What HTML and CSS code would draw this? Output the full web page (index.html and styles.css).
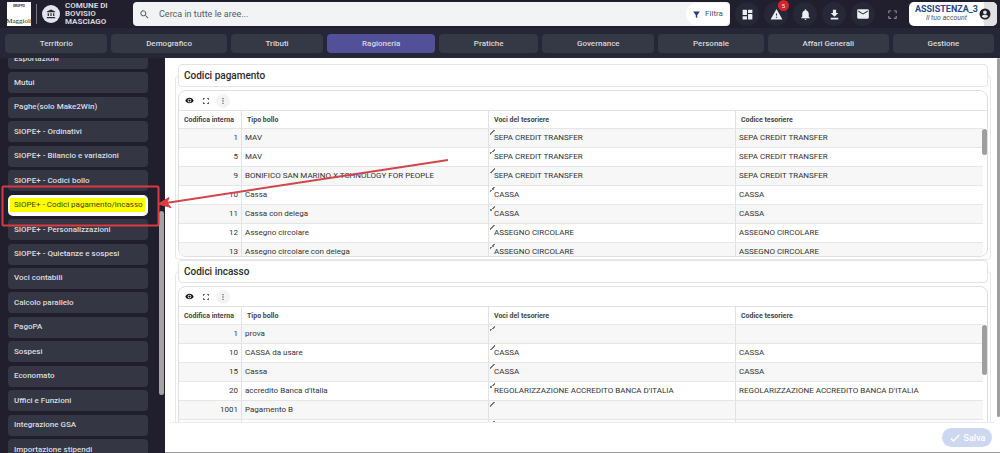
FILE: index.html
```html
<!DOCTYPE html>
<html lang="it">
<head>
<meta charset="utf-8">
<title>Codici pagamento/incasso</title>
<link rel="stylesheet" href="styles.css">
</head>
<body>
<svg class="defs" aria-hidden="true">
  <symbol id="eye" viewBox="0 0 24 24"><path d="M12 4.500C7 4.500 2.700 7.600 1 12c1.700 4.400 6 7.500 11 7.500s9.300-3.100 11-7.500c-1.700-4.400-6-7.500-11-7.500zM12 17a5 5 0 1 1 0-10 5 5 0 0 1 0 10zm0-8a3 3 0 1 0 0 6 3 3 0 0 0 0-6z"/></symbol>
  <symbol id="full" viewBox="0 0 24 24"><path d="M3 3h6v2H5v4H3zM15 3h6v6h-2V5h-4zM3 15h2v4h4v2H3zM19 15h2v6h-6v-2h4z"/></symbol>
  <symbol id="dots" viewBox="0 0 24 24"><circle cx="12" cy="5" r="2"/><circle cx="12" cy="12" r="2"/><circle cx="12" cy="19" r="2"/></symbol>
</svg>

<header class="topbar">
  <div class="logo">
    <span class="logo-small">GRUPPO</span>
    <span class="logo-name">Maggioli</span>
  </div>
  <span class="divider"></span>
  <span class="bank"><svg viewBox="0 0 24 24"><path d="M4 10v7h3v-7zm6.500 0v7h3v-7zM2 22h20v-3H2zm15-12v7h3v-7zM12 1 2 6v2h20V6z"/></svg></span>
  <div class="entity">COMUNE DI<br>BOVISIO<br>MASCIAGO</div>
  <form class="search">
    <svg viewBox="0 0 24 24"><path d="M15.500 14h-.8l-.3-.3a6.500 6.500 0 1 0-.7.7l.3.3v.8l5 5 1.500-1.500zm-6 0a4.500 4.500 0 1 1 0-9 4.500 4.500 0 0 1 0 9z"/></svg>
    <input type="text" placeholder="Cerca in tutte le aree..." aria-label="Cerca">
    <button type="button" class="filter"><svg viewBox="0 0 24 24"><path d="M3 4h18l-7 9v8l-4-2v-6z"/></svg>Filtra</button>
  </form>
  <div class="actions">
    <button type="button" class="round" aria-label="Cruscotto"><svg viewBox="0 0 24 24"><path d="M3 13h8V3H3zm0 8h8v-6H3zm10 0h8V11h-8zm0-18v6h8V3z"/></svg></button>
    <button type="button" class="round" aria-label="Avvisi"><svg viewBox="0 0 24 24"><path d="M1 21h22L12 2zm12-3h-2v-2h2zm0-4h-2v-4h2z" fill-rule="evenodd"/></svg><span class="badge">5</span></button>
    <button type="button" class="round" aria-label="Notifiche"><svg viewBox="0 0 24 24"><path d="M12 22a2 2 0 0 0 2-2h-4a2 2 0 0 0 2 2zm6-6v-5c0-3.100-1.600-5.600-4.500-6.300V4a1.500 1.500 0 0 0-3 0v.7C7.600 5.400 6 7.900 6 11v5l-2 2v1h16v-1z"/></svg></button>
    <button type="button" class="round" aria-label="Scarica"><svg viewBox="0 0 24 24"><path d="M19 9h-4V3H9v6H5l7 7zM5 18v3h14v-3z"/></svg></button>
    <button type="button" class="round" aria-label="Messaggi"><svg class="large" viewBox="0 0 24 24"><path d="M20 4H4a2 2 0 0 0-2 2v12c0 1.100.9 2 2 2h16a2 2 0 0 0 2-2V6a2 2 0 0 0-2-2zm0 4-8 5-8-5V6l8 5 8-5z"/></svg></button>
    <button type="button" class="round plain" aria-label="Schermo intero"><svg><use href="#full"/></svg></button>
  </div>
  <button type="button" class="account">
    <span class="who"><strong>ASSISTENZA_3</strong><em>Il tuo account</em></span>
    <span class="avatar"><svg viewBox="0 0 24 24"><path fill-rule="evenodd" d="M12 1a11 11 0 1 0 0 22 11 11 0 0 0 0-22zm0 4a3.700 3.700 0 1 1 0 7.400A3.700 3.700 0 0 1 12 5zm0 15.200a8 8 0 0 1-6.500-3.500c0-2.100 4.400-3.300 6.500-3.300s6.500 1.200 6.500 3.300a8 8 0 0 1-6.500 3.500z"/></svg></span>
  </button>
</header>

<nav class="tabs">
  <button type="button">Territorio</button>
  <button type="button">Demografico</button>
  <button type="button">Tributi</button>
  <button type="button" class="active">Ragioneria</button>
  <button type="button">Pratiche</button>
  <button type="button">Governance</button>
  <button type="button">Personale</button>
  <button type="button">Affari Generali</button>
  <button type="button">Gestione</button>
</nav>

<div class="workspace">
  <aside class="sidebar">
    <nav class="menu">
      <a href="#">Esportazioni</a>
      <a href="#">Mutui</a>
      <a href="#">Paghe(solo Make2Win)</a>
      <a href="#">SIOPE+ - Ordinativi</a>
      <a href="#">SIOPE+ - Bilancio e variazioni</a>
      <a href="#">SIOPE+ - Codici bollo</a>
      <a href="#" class="current"><mark>SIOPE+ - Codici pagamento/incasso</mark></a>
      <a href="#">SIOPE+ - Personalizzazioni</a>
      <a href="#">SIOPE+ - Quietanze e sospesi</a>
      <a href="#">Voci contabili</a>
      <a href="#">Calcolo parallelo</a>
      <a href="#">PagoPA</a>
      <a href="#">Sospesi</a>
      <a href="#">Economato</a>
      <a href="#">Uffici e Funzioni</a>
      <a href="#">Integrazione GSA</a>
      <a href="#">Importazione stipendi</a>
    </nav>
    <span class="thumb side-thumb"></span>
  </aside>

  <main class="main">
    <div class="content">
      <section class="panel first">
        <h2>Codici pagamento</h2>
        <div class="grid">
          <div class="tools">
            <button type="button" aria-label="Mostra"><svg><use href="#eye"/></svg></button>
            <button type="button" aria-label="Espandi"><svg><use href="#full"/></svg></button>
            <button type="button" class="more" aria-label="Altro"><svg><use href="#dots"/></svg></button>
          </div>
          <div class="rows">
            <table>
              <thead><tr><th class="code">Codifica interna</th><th>Tipo bollo</th><th>Voci del tesoriere</th><th>Codice tesoriere</th></tr></thead>
              <tbody>
                <tr><td>1</td><td>MAV</td><td>SEPA CREDIT TRANSFER</td><td>SEPA CREDIT TRANSFER</td></tr>
                <tr><td>5</td><td>MAV</td><td>SEPA CREDIT TRANSFER</td><td>SEPA CREDIT TRANSFER</td></tr>
                <tr><td>9</td><td>BONIFICO SAN MARINO X TCHNOLOGY FOR PEOPLE</td><td>SEPA CREDIT TRANSFER</td><td>SEPA CREDIT TRANSFER</td></tr>
                <tr><td>10</td><td>Cassa</td><td>CASSA</td><td>CASSA</td></tr>
                <tr><td>11</td><td>Cassa con delega</td><td>CASSA</td><td>CASSA</td></tr>
                <tr><td>12</td><td>Assegno circolare</td><td>ASSEGNO CIRCOLARE</td><td>ASSEGNO CIRCOLARE</td></tr>
                <tr><td>13</td><td>Assegno circolare con delega</td><td>ASSEGNO CIRCOLARE</td><td>ASSEGNO CIRCOLARE</td></tr>
              </tbody>
            </table>
            <span class="thumb row-thumb"></span>
          </div>
        </div>
      </section>
      <section class="panel">
        <h2>Codici incasso</h2>
        <div class="grid">
          <div class="tools">
            <button type="button" aria-label="Mostra"><svg><use href="#eye"/></svg></button>
            <button type="button" aria-label="Espandi"><svg><use href="#full"/></svg></button>
            <button type="button" class="more" aria-label="Altro"><svg><use href="#dots"/></svg></button>
          </div>
          <div class="rows">
            <table>
              <thead><tr><th class="code">Codifica interna</th><th>Tipo bollo</th><th>Voci del tesoriere</th><th>Codice tesoriere</th></tr></thead>
              <tbody>
                <tr><td>1</td><td>prova</td><td></td><td></td></tr>
                <tr><td>10</td><td>CASSA da usare</td><td>CASSA</td><td>CASSA</td></tr>
                <tr><td>15</td><td>Cassa</td><td>CASSA</td><td>CASSA</td></tr>
                <tr><td>20</td><td>accredito Banca d'Italia</td><td>REGOLARIZZAZIONE ACCREDITO BANCA D'ITALIA</td><td>REGOLARIZZAZIONE ACCREDITO BANCA D'ITALIA</td></tr>
                <tr><td>1001</td><td>Pagamento B</td><td></td><td></td></tr>
                <tr><td></td><td></td><td></td><td></td></tr>
              </tbody>
            </table>
            <span class="thumb row-thumb tall"></span>
          </div>
        </div>
      </section>
    </div>
    <footer class="footer">
      <button type="button" class="save" disabled><svg viewBox="0 0 24 24"><path d="M9 16.200 4.800 12l-1.800 1.800L9 20 21.500 7l-1.800-1.800z"/></svg>Salva</button>
    </footer>
    <span class="thumb page-thumb"></span>
  </main>
</div>

<svg class="callout" viewBox="0 0 460 240" aria-hidden="true">
  <rect x="2.500" y="186.500" width="156" height="39" rx="1"/>
  <path class="shaft" d="M448 160 L166 203"/>
  <path class="head" d="M158 204 L169 197.500 L167 203 L171 207.500Z"/>
</svg>
</body>
</html>
```
FILE: styles.css
```css
* { box-sizing: border-box; }
html, body { height: 100%; }
body {
  margin: 0;
  display: flex;
  flex-direction: column;
  overflow: hidden;
  position: relative;
  background: #211f2d;
  color: #333;
  font: 8px/10px Roboto, "Liberation Sans", sans-serif;
}
button, input { font: inherit; color: inherit; border: 0; padding: 0; margin: 0; background: none; }
svg { fill: currentColor; display: block; flex: none; }
.defs { position: absolute; width: 0; height: 0; }

/* top bar */
.topbar {
  display: flex;
  align-items: center;
  height: 28px;
  flex: none;
  padding: 0 3px 0 7px;
  color: #e6e7ec;
}
.logo {
  width: 24px;
  height: 24px;
  padding-top: 2px;
  background: #fff;
  color: #222;
  display: flex;
  flex-direction: column;
  justify-content: space-between;
  align-items: center;
  overflow: hidden;
}
.logo-small { font-size: 3px; line-height: 5px; font-weight: 700; }
.logo-name { font: 7px/9px "Liberation Serif", serif; }
.divider { width: 1px; height: 20px; background: #777682; margin: 0 5px; }
.bank {
  width: 18px;
  height: 18px;
  border-radius: 50%;
  background: #e3e5ea;
  color: #292a38;
  display: grid;
  place-items: center;
}
.bank svg { width: 10px; height: 10px; }
.entity { width: 73px; padding-left: 5px; font-size: 8px; line-height: 8px; font-weight: 700; color: #d4d5da; }
.search {
  flex: 1;
  height: 24px;
  display: flex;
  align-items: center;
  background: #f1f3f4;
  border-radius: 4px;
  padding: 0 1px 0 6px;
}
.search > svg { width: 11px; height: 11px; color: #555; }
.search input { flex: 1; min-width: 0; margin-left: 9px; font-size: 9px; outline: 0; }
.search input::placeholder { color: #5a5c62; opacity: 1; }
.filter {
  display: flex;
  align-items: center;
  justify-content: center;
  gap: 4px;
  width: 43px;
  height: 22px;
  background: #fff;
  border-radius: 11px 4px 4px 11px;
  color: #45546f;
}
.filter svg { width: 9px; height: 9px; color: #1d3f84; }
.actions { display: flex; gap: 5px; margin: 0 5px; }
.round {
  position: relative;
  width: 24px;
  height: 24px;
  border-radius: 50%;
  background: #262737;
  display: grid;
  place-items: center;
  color: #eceef2;
}
.round svg { width: 13px; height: 13px; }
.round svg.large { width: 14px; height: 14px; }
.round.plain { background: none; color: #a5a6af; }
.round.plain svg { width: 11px; height: 11px; }
.badge {
  position: absolute;
  left: 14px;
  top: -2px;
  width: 11px;
  height: 11px;
  border-radius: 50%;
  background: #d5232b;
  font-size: 6px;
  line-height: 11px;
}
.account {
  display: flex;
  align-items: stretch;
  width: 88px;
  height: 24px;
  background: #fff;
  border-radius: 5px;
  overflow: hidden;
}
.who { flex: 1; padding: 2px 0 0 5px; text-align: center; white-space: nowrap; }
.who strong, .who em { display: block; }
.who strong { font-size: 9px; line-height: 10px; color: #28477f; }
.who em { font-size: 7px; line-height: 8px; color: #555; }
.avatar {
  display: flex;
  align-items: center;
  width: 18px;
  color: #1f1f29;
  background: linear-gradient(to right, #fff 5px, #e1e1e3 5px);
}
.avatar svg { width: 12px; height: 12px; }

/* area tabs */
.tabs {
  display: flex;
  gap: 4px;
  flex: none;
  height: 30px;
  padding: 6px 6px 5px 5px;
  background: #252737;
}
.tabs button {
  flex: 1 1 auto;
  border-radius: 4px;
  background: #353845;
  color: #d6d8dd;
  font-weight: 500;
}
.tabs .active { background: #53509a; }

/* side menu */
.workspace { flex: 1; min-height: 0; display: flex; }
.sidebar { position: relative; width: 165px; flex: none; overflow: hidden; display: flex; padding-left: 8px; }
.menu { width: 140px; margin: -10px 0 -7px; display: flex; flex-direction: column; justify-content: space-between; }
.menu a {
  display: flex;
  align-items: center;
  height: 21px;
  padding: 0 6px;
  border-radius: 4px;
  background: #343743;
  color: #dadce0;
  font-weight: 500;
  text-decoration: none;
  white-space: nowrap;
}
.menu .current { background: #fff; padding: 0 2px; border-radius: 5px; font-weight: 400; }
.menu mark { background: #ff0; color: #3c3c1c; padding: 2px 2px 2px 4px; }
.thumb { position: absolute; background: #9e9e9e; border-radius: 3px; }
.side-thumb { right: 1px; top: 153px; width: 5px; height: 184px; background: #a5a3a8; }

/* main area */
.main { position: relative; flex: 1; min-width: 0; display: flex; flex-direction: column; background: #fff; }
.content { flex: 1; min-height: 0; overflow: hidden; margin: 0 6px 0 5px; padding: 6px 3px 0 5px; border-bottom: 1px solid #ececec; }
.page-thumb { right: 0; top: 0; width: 3px; height: 359px; }
.panel { position: relative; padding: 0 3px 3px; }
.panel::before {
  content: "";
  position: absolute;
  inset: 11px 0 0;
  border: 1px solid #e7e7ea;
  border-radius: 4px;
}
.panel h2 {
  position: relative;
  margin: 0 0 3px;
  padding: 0 5px;
  height: 23px;
  border: 1px solid #e4e4e6;
  border-radius: 4px;
  background: #fff;
  font-size: 10px;
  line-height: 21px;
  font-weight: 500;
  color: #2b2b2b;
}
.grid { position: relative; border: 1px solid #dfdfe2; border-radius: 8px; overflow: hidden; background: #fff; }
.first .grid { height: 167px; }
.tools { display: flex; gap: 3px; height: 20px; align-items: center; padding: 0 3px; border-bottom: 1px solid #e2e2e2; color: #444; }
.tools button { width: 14px; height: 14px; border-radius: 50%; display: grid; place-items: center; }
.tools svg { width: 8px; height: 8px; }
.tools button:first-child svg { width: 9px; height: 9px; color: #111; }
.tools .more { background: #f3f3f3; }
.rows { position: relative; padding-right: 4px; }
.row-thumb { right: 0; top: 18px; width: 5px; height: 26px; }
.row-thumb.tall { height: 50px; }
table { width: 100%; table-layout: fixed; border-collapse: separate; border-spacing: 0; }
th, td { height: 19px; padding: 0 3px; text-align: left; white-space: nowrap; border-right: 1px solid #e2e2e2; border-bottom: 1px solid #e6e6e6; }
th:last-child, td:last-child { border-right: 0; }
th { height: 18px; padding-left: 5px; font-size: 7px; font-weight: 700; color: #444; }
.code { width: 63px; }
td:first-child { text-align: right; }
td:nth-child(3) {
  padding-left: 5px;
  background: linear-gradient(135deg, transparent 40%, #777 40%, #777 60%, transparent 60%) 1px 1px / 5px 5px no-repeat;
}
tbody tr:nth-child(odd) { background: #f7f7f7; }

.footer { display: flex; justify-content: flex-end; align-items: center; height: 30px; flex: none; padding: 0 8px; border-bottom: 1px solid #999; }
.save {
  display: flex;
  align-items: center;
  justify-content: center;
  gap: 3px;
  width: 50px;
  height: 19px;
  border-radius: 10px;
  background: #cdd7ef;
  color: #fff;
  font-size: 9px;
  font-weight: 500;
}
.save svg { width: 12px; height: 12px; }

/* callout drawn over the page */
.callout { position: absolute; left: 0; top: 0; width: 460px; height: 240px; pointer-events: none; fill: none; }
.callout rect { stroke: #d93a43; stroke-width: 2; }
.callout .shaft { stroke: #cf464d; stroke-width: 2; }
.callout .head { fill: #dc3b42; stroke: #dc3b42; }
```
